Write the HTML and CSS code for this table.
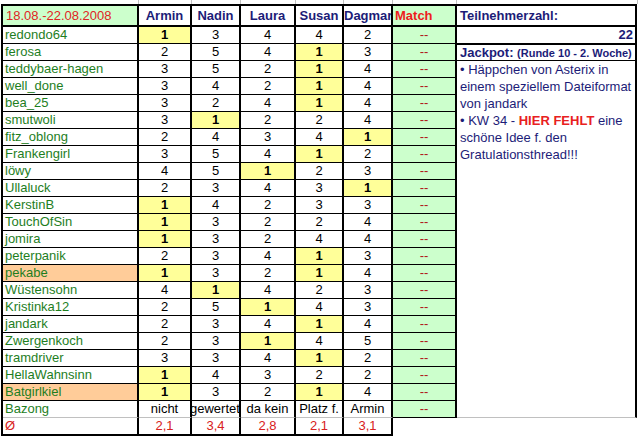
FILE: index.html
```html
<!DOCTYPE html>
<html lang="de">
<head>
<meta charset="utf-8">
<title>Tippspiel</title>
<link rel="stylesheet" href="styles.css">
</head>
<body>
<div class="topgrid">
  <div></div><div></div><div></div><div></div><div></div><div></div><div></div><div></div>
</div>
<div class="sheet">
  <div class="table">
    <div class="c h date">18.08.-22.08.2008</div>
    <div class="c h">Armin</div>
    <div class="c h">Nadin</div>
    <div class="c h">Laura</div>
    <div class="c h">Susan</div>
    <div class="c h left">Dagmar</div>
    <div class="c h match">Match</div>

    <div class="c nm">redondo64</div><div class="c num hl">1</div><div class="c num">3</div><div class="c num">4</div><div class="c num">4</div><div class="c num">2</div><div class="c mt">--</div>
    <div class="c nm">ferosa</div><div class="c num">2</div><div class="c num">5</div><div class="c num">4</div><div class="c num hl">1</div><div class="c num">3</div><div class="c mt">--</div>
    <div class="c nm">teddybaer-hagen</div><div class="c num">3</div><div class="c num">5</div><div class="c num">2</div><div class="c num hl">1</div><div class="c num">4</div><div class="c mt">--</div>
    <div class="c nm">well_done</div><div class="c num">3</div><div class="c num">4</div><div class="c num">2</div><div class="c num hl">1</div><div class="c num">4</div><div class="c mt">--</div>
    <div class="c nm">bea_25</div><div class="c num">3</div><div class="c num">2</div><div class="c num">4</div><div class="c num hl">1</div><div class="c num">4</div><div class="c mt">--</div>
    <div class="c nm">smutwoli</div><div class="c num">3</div><div class="c num hl">1</div><div class="c num">2</div><div class="c num">2</div><div class="c num">4</div><div class="c mt">--</div>
    <div class="c nm">fitz_oblong</div><div class="c num">2</div><div class="c num">4</div><div class="c num">3</div><div class="c num">4</div><div class="c num hl">1</div><div class="c mt">--</div>
    <div class="c nm">Frankengirl</div><div class="c num">3</div><div class="c num">5</div><div class="c num">4</div><div class="c num hl">1</div><div class="c num">2</div><div class="c mt">--</div>
    <div class="c nm">löwy</div><div class="c num">4</div><div class="c num">5</div><div class="c num hl">1</div><div class="c num">2</div><div class="c num">3</div><div class="c mt">--</div>
    <div class="c nm">Ullaluck</div><div class="c num">2</div><div class="c num">3</div><div class="c num">4</div><div class="c num">3</div><div class="c num hl">1</div><div class="c mt">--</div>
    <div class="c nm">KerstinB</div><div class="c num hl">1</div><div class="c num">4</div><div class="c num">2</div><div class="c num">3</div><div class="c num">3</div><div class="c mt">--</div>
    <div class="c nm">TouchOfSin</div><div class="c num hl">1</div><div class="c num">3</div><div class="c num">2</div><div class="c num">2</div><div class="c num">4</div><div class="c mt">--</div>
    <div class="c nm">jomira</div><div class="c num hl">1</div><div class="c num">3</div><div class="c num">2</div><div class="c num">4</div><div class="c num">4</div><div class="c mt">--</div>
    <div class="c nm">peterpanik</div><div class="c num">2</div><div class="c num">3</div><div class="c num">4</div><div class="c num hl">1</div><div class="c num">3</div><div class="c mt">--</div>
    <div class="c nm pk">pekabe</div><div class="c num hl">1</div><div class="c num">3</div><div class="c num">2</div><div class="c num hl">1</div><div class="c num">4</div><div class="c mt">--</div>
    <div class="c nm">Wüstensohn</div><div class="c num">4</div><div class="c num hl">1</div><div class="c num">4</div><div class="c num">2</div><div class="c num">3</div><div class="c mt">--</div>
    <div class="c nm">Kristinka12</div><div class="c num">2</div><div class="c num">5</div><div class="c num hl">1</div><div class="c num">4</div><div class="c num">3</div><div class="c mt">--</div>
    <div class="c nm">jandark</div><div class="c num">2</div><div class="c num">3</div><div class="c num">4</div><div class="c num hl">1</div><div class="c num">4</div><div class="c mt">--</div>
    <div class="c nm">Zwergenkoch</div><div class="c num">2</div><div class="c num">3</div><div class="c num hl">1</div><div class="c num">4</div><div class="c num">5</div><div class="c mt">--</div>
    <div class="c nm">tramdriver</div><div class="c num">3</div><div class="c num">3</div><div class="c num">4</div><div class="c num hl">1</div><div class="c num">2</div><div class="c mt">--</div>
    <div class="c nm">HellaWahnsinn</div><div class="c num hl">1</div><div class="c num">4</div><div class="c num">3</div><div class="c num">2</div><div class="c num">2</div><div class="c mt">--</div>
    <div class="c nm pk">Batgirlkiel</div><div class="c num hl">1</div><div class="c num">3</div><div class="c num">2</div><div class="c num hl">1</div><div class="c num">4</div><div class="c mt">--</div>
    <div class="c nm gb">Bazong</div><div class="c num gb">nicht</div><div class="c num gb clip">gewertet</div><div class="c num gb">da kein</div><div class="c num gb">Platz f.</div><div class="c num gb">Armin</div><div class="c mt">--</div>

    <div class="c avg nml">Ø</div><div class="c avg num">2,1</div><div class="c avg num">3,4</div><div class="c avg num">2,8</div><div class="c avg num">2,1</div><div class="c avg num">3,1</div><div class="c avgm"></div>
  </div>

  <div class="panel">
    <div class="p-head">Teilnehmerzahl:</div>
    <div class="p-count">22</div>
    <div class="p-jack">Jackpot: <span class="small">(Runde 10 - 2. Woche)</span></div>
    <div class="p-body">
      • Häppchen von Asterix in<br>
      einem speziellem Dateiformat<br>
      von jandark<br>
      • KW 34 - <b class="red">HIER FEHLT</b> eine<br>
      schöne Idee f. den<br>
      Gratulationsthread!!!
    </div>
  </div>
</div>
</body>
</html>
```

FILE: styles.css
```css
html, body {
  margin: 0;
  padding: 0;
  background: #ffffff;
}

body {
  font-family: "Liberation Sans", Arial, sans-serif;
  font-size: 13px;
  color: #000;
  width: 640px;
  height: 440px;
  overflow: hidden;
}

.topgrid {
  display: grid;
  grid-template-columns: 139px 53px 49px 55px 48px 49px 64px 181px;
  height: 4px;
}

.topgrid div {
  border-right: 1px solid #c0c0c0;
}

.sheet {
  display: flex;
  align-items: flex-start;
  margin-left: 1px;
}

.table {
  display: grid;
  grid-template-columns: 136px 53px 49px 55px 48px 49px 64px;
  border-left: 2px solid #000;
  border-top: 2px solid #000;
}

.c {
  box-sizing: border-box;
  height: 17px;
  line-height: 16px;
  border-right: 2px solid #000;
  border-bottom: 1px solid #000;
  white-space: nowrap;
  overflow: hidden;
}

.h {
  height: 21px;
  line-height: 20px;
  border-bottom: 2px solid #000;
  font-weight: bold;
  color: #1c1c78;
  text-align: center;
}

.h.left {
  text-align: left;
}

.date {
  background: #ccffcc;
  color: #e02424;
  font-weight: normal;
  text-align: left;
  padding-left: 3px;
}

.match {
  background: #ccffcc;
  color: #ee1c1c;
  text-align: left;
  padding-left: 2px;
}

.nm {
  color: #1e7e1e;
  padding-left: 2px;
}

.num {
  text-align: center;
}

.hl {
  background: #ffff99;
  font-weight: bold;
}

.pk {
  background: #ffcc99;
}

.mt {
  background: #ccffcc;
  color: #b01818;
  text-align: center;
}

.gb {
  border-bottom-color: #c0c0c0;
}

.clip {
  text-align: left;
  text-indent: -2px;
}

.avg {
  border-bottom: 2px solid #000;
  color: #d82020;
  height: 18px;
}

.nml {
  padding-left: 2px;
}

.avgm {
  border-right: none;
  border-bottom: none;
  height: 18px;
}

.panel {
  box-sizing: border-box;
  width: 180px;
  height: 414px;
  border-top: 2px solid #000;
  border-right: 2px solid #000;
  border-bottom: 1px solid #c0c0c0;
  color: #1c1c78;
  display: flex;
  flex-direction: column;
}

.p-head {
  height: 21px;
  box-sizing: border-box;
  line-height: 20px;
  border-bottom: 2px solid #000;
  font-weight: bold;
  padding-left: 3px;
}

.p-count {
  height: 18px;
  box-sizing: border-box;
  line-height: 16px;
  border-bottom: 2px solid #000;
  font-weight: bold;
  text-align: right;
  padding-right: 2px;
}

.p-jack {
  height: 16px;
  box-sizing: border-box;
  line-height: 15px;
  border-bottom: 1px solid #000;
  font-weight: bold;
  padding-left: 3px;
  white-space: nowrap;
}

.small {
  font-size: 11px;
}

.p-body {
  line-height: 17px;
  padding-left: 3px;
  white-space: nowrap;
}

.red {
  color: #e82020;
}
```
